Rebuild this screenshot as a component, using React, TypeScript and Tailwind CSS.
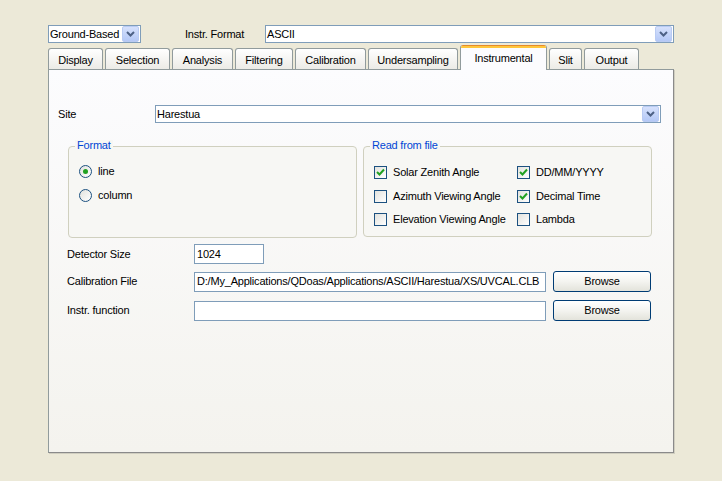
import React from "react";

const font = { fontFamily: '"Liberation Sans", Arial, sans-serif' };

function Arrow() {
  return (
    <div className="w-[17px] h-[16px] mr-[1px] shrink-0 rounded-[2px] border border-[#B9CBF3] bg-gradient-to-b from-[#D6E1FC] to-[#B4C8F6] flex items-center justify-center">
      <svg width="9" height="6" viewBox="0 0 9 6">
        <path d="M1 1 L4.5 4.5 L8 1" fill="none" stroke="#4D6185" strokeWidth="2" />
      </svg>
    </div>
  );
}

function Combo({ text, className }: { text: string; className: string }) {
  return (
    <div className={"h-[18px] bg-white border border-[#7F9DB9] flex items-center justify-between " + className}>
      <span className="pl-[1px] text-[11px] tracking-[-0.2px] leading-none text-black whitespace-nowrap">{text}</span>
      <Arrow />
    </div>
  );
}

function Tab({ label, w, active }: { label: string; w: number; active?: boolean }) {
  if (active) {
    return (
      <div
        className="relative z-10 h-[25px] -mb-[1px] flex flex-col rounded-t-[3px] overflow-hidden border-x border-[#919B9C] bg-[#FCFCFE]"
        style={{ width: w }}
      >
        <div className="h-[1px] bg-[#E68B2C]" />
        <div className="h-[2px] bg-[#FFC73C]" />
        <div className="flex-1 flex items-center justify-center text-[11px] tracking-[-0.2px] text-black pb-[1px]">{label}</div>
      </div>
    );
  }
  return (
    <div
      className="h-[21px] pt-[2px] flex items-center justify-center rounded-t-[3px] border border-b-0 border-[#919B9C] bg-gradient-to-b from-[#FFFFFF] to-[#ECEBE6] text-[11px] tracking-[-0.2px] text-black"
      style={{ width: w }}
    >
      {label}
    </div>
  );
}

function Radio({ checked, label }: { checked?: boolean; label: string }) {
  return (
    <div className="flex items-center h-[13px]">
      <div className="w-[13px] h-[13px] rounded-full border border-[#1C5180] bg-gradient-to-br from-[#E2E2DD] to-[#FFFFFF] flex items-center justify-center">
        {checked && <div className="w-[5px] h-[5px] rounded-full bg-[#21A121]" />}
      </div>
      <span className="ml-[6px] text-[11px] tracking-[-0.2px] text-black">{label}</span>
    </div>
  );
}

function Check({ checked, label }: { checked?: boolean; label: string }) {
  return (
    <div className="flex items-center h-[13px]">
      <div className="w-[13px] h-[13px] border border-[#1C5180] bg-gradient-to-br from-[#E2E2DD] to-[#FFFFFF] flex items-center justify-center">
        {checked && (
          <svg width="11" height="11" viewBox="0 0 11 11">
            <path d="M2 5 L4.5 7.5 L9 2.5" fill="none" stroke="#21A121" strokeWidth="2" />
          </svg>
        )}
      </div>
      <span className="ml-[6px] text-[11px] tracking-[-0.2px] text-black whitespace-nowrap">{label}</span>
    </div>
  );
}

function Group({ title, className, children }: { title: string; className: string; children: React.ReactNode }) {
  return (
    <div className={"relative rounded-[4px] border border-[#D0D0BF] " + className}>
      <span className="absolute -top-[7px] left-[6px] px-[2px] bg-[#F7F7F4] text-[11px] tracking-[-0.2px] leading-none text-[#0046D5]">
        {title}
      </span>
      {children}
    </div>
  );
}

function Button({ label }: { label: string }) {
  return (
    <div className="w-[98px] h-[21px] rounded-[3px] border border-[#003C74] bg-gradient-to-b from-[#FFFFFF] via-[#F4F4F0] to-[#E3E3DB] flex items-center justify-center text-[11px] tracking-[-0.2px] text-black">
      {label}
    </div>
  );
}

export default function App() {
  const tabs: [string, number][] = [
    ["Display", 55],
    ["Selection", 65],
    ["Analysis", 61],
    ["Filtering", 58],
    ["Calibration", 71],
    ["Undersampling", 90],
  ];
  const lbl = "text-[11px] tracking-[-0.2px] text-black";
  return (
    <div className="w-[722px] h-[481px] bg-[#ECE9D8] overflow-hidden" style={font}>
      <div className="pt-[25px] pl-[48px] flex items-center">
        <Combo text="Ground-Based" className="w-[93px]" />
        <span className={"ml-[44px] w-[80px] " + lbl}>Instr. Format</span>
        <Combo text="ASCII" className="w-[409px]" />
      </div>
      <div className="mt-[2px] pl-[48px] flex items-end gap-[2px] h-[24px]">
        {tabs.map(([l, w]) => (
          <Tab key={l} label={l} w={w} />
        ))}
        <Tab label="Instrumental" w={87} active />
        <Tab label="Slit" w={33} />
        <Tab label="Output" w={55} />
      </div>
      <div className="ml-[48px] w-[626px] h-[384px] border border-[#919B9C] border-r-[#8A8A8A] border-b-[#8A8A8A] shadow-[1px_1px_0_#D0CEC0] bg-gradient-to-b from-[#FCFCFE] to-[#F4F3EE]">
        <div className="mt-[35px] flex items-center h-[18px]">
          <span className={"pl-[9px] w-[106px] " + lbl}>Site</span>
          <Combo text="Harestua" className="w-[506px]" />
        </div>
        <div className="mt-[23px] ml-[19px] flex gap-[6px]">
          <Group title="Format" className="w-[289px] h-[92px] bg-[#F7F7F4]">
            <div className="pt-[18px] pl-[10px] flex flex-col gap-[11px]">
              <Radio checked label="line" />
              <Radio label="column" />
            </div>
          </Group>
          <Group title="Read from file" className="w-[289px] h-[91px] bg-[#F7F7F4]">
            <div className="pt-[19px] pl-[10px] flex">
              <div className="w-[143px] flex flex-col gap-[10.5px]">
                <Check checked label="Solar Zenith Angle" />
                <Check label="Azimuth Viewing Angle" />
                <Check label="Elevation Viewing Angle" />
              </div>
              <div className="flex flex-col gap-[10.5px]">
                <Check checked label="DD/MM/YYYY" />
                <Check checked label="Decimal Time" />
                <Check label="Lambda" />
              </div>
            </div>
          </Group>
        </div>
        <div className="mt-[6px] flex items-center h-[20px]">
          <span className={"pl-[18px] w-[145px] " + lbl}>Detector Size</span>
          <div className={"w-[70px] h-[20px] bg-white border border-[#7F9DB9] flex items-center pl-[2px] " + lbl}>1024</div>
        </div>
        <div className="mt-[7px] flex items-center h-[21px]">
          <span className={"pl-[18px] w-[145px] " + lbl}>Calibration File</span>
          <div className={"w-[352px] h-[20px] bg-white border border-[#7F9DB9] flex items-center pl-[2px] whitespace-nowrap overflow-hidden " + lbl}>
            D:/My_Applications/QDoas/Applications/ASCII/Harestua/XS/UVCAL.CLB
          </div>
          <div className="ml-[7px]">
            <Button label="Browse" />
          </div>
        </div>
        <div className="mt-[8px] flex items-center h-[21px]">
          <span className={"pl-[18px] w-[145px] " + lbl}>Instr. function</span>
          <div className="w-[352px] h-[20px] bg-white border border-[#7F9DB9]" />
          <div className="ml-[7px]">
            <Button label="Browse" />
          </div>
        </div>
      </div>
    </div>
  );
}
